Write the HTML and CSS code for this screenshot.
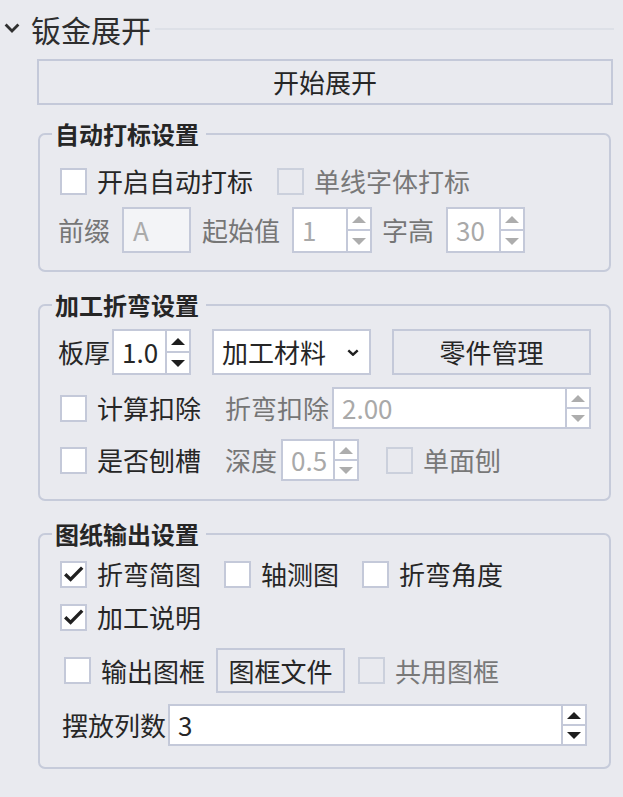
FILE: index.html
```html
<!DOCTYPE html>
<html lang="zh-CN">
<head>
<meta charset="utf-8">
<title>钣金展开</title>
<link rel="stylesheet" href="styles.css">
</head>
<body>
<div class="panel">
  <div class="section-head">
    <svg class="chev" viewBox="0 0 16 10"><path d="M1.6 1.6 L8 8 L14.4 1.6"/></svg>
    <span class="section-title">钣金展开</span>
    <span class="section-rule"></span>
  </div>

  <div class="content">
    <button class="btn btn-wide">开始展开</button>

    <fieldset class="group g1">
      <legend>自动打标设置</legend>
      <div class="row h32 pl2">
        <label class="check"><span class="box"></span><span class="txt">开启自动打标</span></label>
        <label class="check disabled ml24"><span class="box"></span><span class="txt">单线字体打标</span></label>
      </div>
      <div class="row h46 mt10">
        <span class="lbl dim">前缀</span>
        <span class="field disabled ml12 w69">A</span>
        <span class="lbl dim ml11">起始值</span>
        <div class="spin disabled ml12 w80"><span class="val">1</span><span class="arrows"><span class="up"><i></i></span><span class="down"><i></i></span></span></div>
        <span class="lbl dim ml10">字高</span>
        <div class="spin disabled ml12 w79"><span class="val">30</span><span class="arrows"><span class="up"><i></i></span><span class="down"><i></i></span></span></div>
      </div>
    </fieldset>

    <fieldset class="group g2">
      <legend>加工折弯设置</legend>
      <div class="row h46">
        <span class="lbl">板厚</span>
        <div class="spin ml2 w79"><span class="val">1.0</span><span class="arrows"><span class="up"><i></i></span><span class="down"><i></i></span></span></div>
        <div class="select ml21 w159"><span class="val">加工材料</span><svg class="sel-chev" viewBox="0 0 12 7"><path d="M1.3 1.3 L6 5.7 L10.7 1.3"/></svg></div>
        <button class="btn ml21 w199">零件管理</button>
      </div>
      <div class="row h42 mt12 pl2">
        <label class="check"><span class="box"></span><span class="txt">计算扣除</span></label>
        <span class="lbl dim ml24">折弯扣除</span>
        <div class="spin disabled ml3 grow"><span class="val">2.00</span><span class="arrows"><span class="up"><i></i></span><span class="down"><i></i></span></span></div>
      </div>
      <div class="row h42 mt10 pl2">
        <label class="check"><span class="box"></span><span class="txt">是否刨槽</span></label>
        <span class="lbl dim ml24">深度</span>
        <div class="spin disabled ml4 w78"><span class="val">0.5</span><span class="arrows"><span class="up"><i></i></span><span class="down"><i></i></span></span></div>
        <label class="check disabled ml27"><span class="box"></span><span class="txt">单面刨</span></label>
      </div>
    </fieldset>

    <fieldset class="group g3">
      <legend>图纸输出设置</legend>
      <div class="row h32 pl2">
        <label class="check checked"><span class="box"><svg viewBox="0 0 23 23"><path d="M3.2 11.2 L8.6 16.4 L20.2 4.6"/></svg></span><span class="txt">折弯简图</span></label>
        <label class="check ml23"><span class="box"></span><span class="txt">轴测图</span></label>
        <label class="check ml23"><span class="box"></span><span class="txt">折弯角度</span></label>
      </div>
      <div class="row h32 mt11 pl2">
        <label class="check checked"><span class="box"><svg viewBox="0 0 23 23"><path d="M3.2 11.2 L8.6 16.4 L20.2 4.6"/></svg></span><span class="txt">加工说明</span></label>
      </div>
      <div class="row h45 mt15 pl6">
        <label class="check"><span class="box"></span><span class="txt">输出图框</span></label>
        <button class="btn ml11 w129">图框文件</button>
        <label class="check disabled ml13"><span class="box"></span><span class="txt">共用图框</span></label>
      </div>
      <div class="row h42 mt11 pl4 pr4">
        <span class="lbl">摆放列数</span>
        <div class="spin ml2 grow"><span class="val">3</span><span class="arrows"><span class="up"><i></i></span><span class="down"><i></i></span></span></div>
      </div>
    </fieldset>
  </div>
</div>
</body>
</html>
```

FILE: styles.css
```css
* { box-sizing: border-box; }

html, body {
  margin: 0;
  background: #e9eaef;
}

body {
  width: 623px;
  height: 797px;
  overflow: hidden;
  font-family: "Noto Sans CJK SC", "Noto Sans", sans-serif;
  color: #262626;
}

.section-head {
  display: flex;
  align-items: center;
  height: 40px;
  margin-top: 9px;
  padding-left: 4px;
}

.chev {
  width: 16px;
  height: 10px;
  margin-top: -3px;
  fill: none;
  stroke: #303030;
  stroke-width: 2.8;
}

.section-title {
  margin-left: 11px;
  font-size: 30px;
  line-height: 40px;
  color: #2e2e2e;
}

.section-rule {
  flex: 1;
  height: 2px;
  margin: 0 9px 0 4px;
  background: #dde0e7;
}

.content {
  padding: 0 10px 0 37px;
}

.btn {
  font-family: inherit;
  font-size: 26px;
  color: #262626;
  background: transparent;
  border: 2px solid #c4c9d9;
  border-radius: 0;
  padding: 0;
  margin: 0;
  height: 100%;
  line-height: 1;
}

.btn-wide {
  display: block;
  width: 100%;
  height: 46px;
  margin-top: 10px;
}

.group {
  margin: 19px 2px 0 1px;
  border: 2px solid #c6cbda;
  border-radius: 7px;
  padding: 10px 18px 18px 18px;
  min-inline-size: 0;
}

.group legend {
  font-size: 24px;
  font-weight: bold;
  line-height: 28px;
  padding: 0 7px 0 3px;
  margin-left: -6px;
  color: #262626;
}

.g1 { margin-top: 15px; padding-top: 17px; padding-bottom: 17px; }
.g2 { padding-top: 10px; padding-bottom: 18px; }
.g3 { padding-top: 10px; padding-bottom: 21px; }

.row {
  display: flex;
  align-items: center;
  font-size: 26px;
  line-height: 32px;
}

.h32 { height: 32px; }
.h42 { height: 42px; }
.h45 { height: 45px; }
.h46 { height: 46px; }

.mt10 { margin-top: 10px; }
.mt11 { margin-top: 11px; }
.mt12 { margin-top: 12px; }
.mt15 { margin-top: 15px; }

.pl2 { padding-left: 2px; }
.pl4 { padding-left: 4px; }
.pl6 { padding-left: 6px; }
.pr4 { padding-right: 4px; }

.ml2 { margin-left: 2px; }
.ml3 { margin-left: 3px; }
.ml4 { margin-left: 4px; }
.ml10 { margin-left: 10px; }
.ml11 { margin-left: 11px; }
.ml12 { margin-left: 12px; }
.ml13 { margin-left: 13px; }
.ml21 { margin-left: 21px; }
.ml23 { margin-left: 23px; }
.ml24 { margin-left: 24px; }
.ml27 { margin-left: 27px; }

.w69 { width: 69px; }
.w78 { width: 78px; }
.w79 { width: 79px; }
.w80 { width: 80px; }
.w129 { width: 129px; }
.w159 { width: 159px; }
.w199 { width: 199px; }
.grow { flex: 1; }

.lbl { white-space: nowrap; }
.dim { color: #767676; }

/* checkbox */
.check {
  display: flex;
  align-items: center;
  white-space: nowrap;
}
.check .box {
  width: 27px;
  height: 27px;
  border: 2px solid #c4c9d9;
  background: #ffffff;
  flex: none;
  display: flex;
}
.check .box svg {
  width: 23px;
  height: 23px;
  fill: none;
  stroke: #202020;
  stroke-width: 3.4;
}
.check .txt { margin-left: 10px; }
.check.disabled .box {
  background: transparent;
  border-color: #cbd0dc;
}
.check.disabled .txt { color: #787878; }

/* text field */
.field {
  height: 100%;
  border: 2px solid #c4c9d9;
  background: #ffffff;
  padding-left: 9px;
  display: flex;
  align-items: center;
}
.field.disabled {
  background: #f3f4f7;
  color: #ababab;
}

/* spin box */
.spin {
  height: 100%;
  display: flex;
  border: 2px solid #c4c9d9;
  background: #ffffff;
}
.spin .val {
  flex: 1;
  display: flex;
  align-items: center;
  padding-left: 8px;
  min-width: 0;
}
.spin.disabled .val { color: #a9a9a9; }
.spin .arrows {
  width: 24px;
  flex: none;
  display: flex;
  flex-direction: column;
  border-left: 2px solid #c4c9d9;
}
.spin .up, .spin .down {
  flex: 1;
  display: flex;
  align-items: center;
  justify-content: center;
}
.spin .down { border-top: 2px solid #c4c9d9; }
.spin .up i {
  width: 0;
  height: 0;
  border-left: 7px solid transparent;
  border-right: 7px solid transparent;
  border-bottom: 7px solid #1e1e1e;
}
.spin .down i {
  width: 0;
  height: 0;
  border-left: 7px solid transparent;
  border-right: 7px solid transparent;
  border-top: 7px solid #1e1e1e;
}
.spin.disabled .up i { border-bottom-color: #adadad; }
.spin.disabled .down i { border-top-color: #adadad; }

/* select */
.select {
  height: 100%;
  display: flex;
  align-items: center;
  border: 2px solid #c4c9d9;
  background: #ffffff;
  padding-left: 8px;
}
.select .val { flex: 1; white-space: nowrap; }
.sel-chev {
  width: 12px;
  height: 7px;
  margin-right: 10px;
  fill: none;
  stroke: #202020;
  stroke-width: 2.4;
}
```
